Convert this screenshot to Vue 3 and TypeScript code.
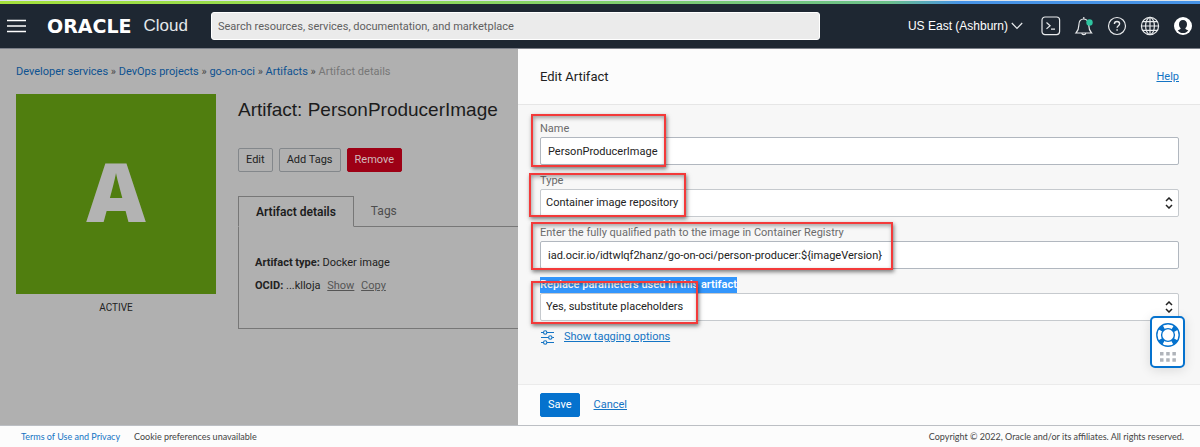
<script setup lang="ts">
import { ref } from 'vue'

interface Crumb { label: string; current?: boolean }

const crumbs: Crumb[] = [
  { label: 'Developer services' },
  { label: 'DevOps projects' },
  { label: 'go-on-oci' },
  { label: 'Artifacts' },
  { label: 'Artifact details', current: true },
]

const name = ref('PersonProducerImage')
const kind = ref('Container image repository')
const path = ref('iad.ocir.io/idtwlqf2hanz/go-on-oci/person-producer:${imageVersion}')
const replace = ref('Yes, substitute placeholders')
</script>

<template>
  <div class="page">
    <div class="strip"></div>
    <header class="topbar">
      <button class="icon-btn menu" aria-label="Menu">
        <svg width="20" height="14" viewBox="0 0 20 14"><path d="M0 1.5h19M0 7h19M0 12.5h19" stroke="#fff" stroke-width="1.6" /></svg>
      </button>
      <a class="logo" href="#"><span class="oracle">ORACLE</span><span class="cloud">Cloud</span></a>
      <input class="search" type="text" aria-label="Search" placeholder="Search resources, services, documentation, and marketplace" />
      <button class="region">
        US East (Ashburn)
        <svg width="12" height="8" viewBox="0 0 12 8"><path d="M.8 1l5.2 5.4L11.200 1" fill="none" stroke="#e8eaec" stroke-width="1.2" /></svg>
      </button>
      <nav class="tools">
        <button class="icon-btn" aria-label="Cloud Shell">
          <svg width="20" height="20" viewBox="0 0 20 20" fill="none" stroke="#e8eaec" stroke-width="1.2"><rect x="1" y="1" width="17.600" height="17.600" rx="3" /><path d="M5.500 6.500l3.600 3.200-3.600 3.200M10 13.200h4" /></svg>
        </button>
        <button class="icon-btn" aria-label="Announcements">
          <svg width="20" height="20" viewBox="0 0 20 20" fill="none" stroke="#e8eaec" stroke-width="1.2"><path d="M2 17h15.500c-2.200-2.400-2.700-4.500-2.700-7.500 0-4-2-6.500-5-6.500s-5 2.500-5 6.500C4.800 12.500 4.200 14.600 2 17zM7.800 17.200c.2 2 3.800 2 4 0M9.800 3V1" /><circle cx="15.500" cy="6.500" r="3.200" fill="#2ec4a0" stroke="none" /></svg>
        </button>
        <button class="icon-btn" aria-label="Help">
          <svg width="20" height="20" viewBox="0 0 20 20" fill="none" stroke="#e8eaec" stroke-width="1.200"><circle cx="10" cy="10" r="8.500" /><path d="M7.400 8c0-3.400 5.200-3.200 5.200-.2 0 1.900-2.500 1.900-2.500 4M10.100 13.200v1.500" stroke-width="1.400" /></svg>
        </button>
        <button class="icon-btn" aria-label="Language">
          <svg width="20" height="20" viewBox="0 0 20 20" fill="none" stroke="#e8eaec" stroke-width="1.200"><circle cx="10" cy="10" r="8.600" /><ellipse cx="10" cy="10" rx="4.400" ry="8.600" /><path d="M10 1.400v17.200M1.400 10h17.200M2.600 5.700h14.800M2.600 14.300h14.800" /></svg>
        </button>
        <button class="icon-btn" aria-label="Profile">
          <svg width="20" height="20" viewBox="0 0 20 20"><circle cx="10" cy="10" r="9" fill="#fff" /><path d="M10 4c2.500 0 4 1.700 4 4.200 0 1.800-.7 3.200-1.700 4 .1 1.300 1.600 1.600 3 2.300-1.400 1.700-3.200 2.600-5.300 2.600s-3.900-.9-5.300-2.600c1.400-.7 2.900-1 3-2.300-1-.8-1.700-2.200-1.700-4C6 5.700 7.500 4 10 4z" fill="#1e2732" /></svg>
        </button>
      </nav>
    </header>

    <div class="workspace">
      <main class="detail">
        <nav class="crumbs" aria-label="Breadcrumb">
          <template v-for="(crumb, i) in crumbs" :key="crumb.label">
            <span v-if="i > 0" class="sep"> » </span>
            <span v-if="crumb.current" class="current">{{ crumb.label }}</span>
            <a v-else href="#">{{ crumb.label }}</a>
          </template>
        </nav>
        <div class="resource">
          <div class="status">
            <div class="tile">A</div>
            <div class="state">ACTIVE</div>
          </div>
          <section class="info">
            <h1>Artifact: PersonProducerImage</h1>
            <div class="actions">
              <button class="btn">Edit</button>
              <button class="btn">Add Tags</button>
              <button class="btn danger">Remove</button>
            </div>
            <div class="tabs" role="tablist">
              <button class="tab active" role="tab" aria-selected="true">Artifact details</button>
              <button class="tab" role="tab" aria-selected="false">Tags</button>
            </div>
            <div class="tab-panel">
              <p><b>Artifact type:</b> Docker image</p>
              <p><b>OCID:</b> ...klloja <a href="#">Show</a> <a href="#">Copy</a></p>
            </div>
          </section>
        </div>
      </main>

      <aside class="drawer">
        <header class="drawer-head">
          <h2>Edit Artifact</h2>
          <a href="#">Help</a>
        </header>
        <form class="drawer-body" @submit.prevent>
          <div class="field">
            <label for="name">Name</label>
            <input id="name" v-model="name" type="text" />
            <span class="mark mark-name"></span>
          </div>
          <div class="field">
            <label for="kind">Type</label>
            <div class="select">
              <select id="kind" v-model="kind"><option>Container image repository</option></select>
              <svg width="8" height="12" viewBox="0 0 8 12"><path d="M1 4l3-3 3 3M1 8l3 3 3-3" fill="none" stroke="#222" stroke-width="1.500" /></svg>
            </div>
            <span class="mark mark-kind"></span>
          </div>
          <div class="field">
            <label for="path">Enter the fully qualified path to the image in Container Registry</label>
            <input id="path" v-model="path" type="text" />
            <span class="mark mark-path"></span>
          </div>
          <div class="field">
            <label for="replace" class="selected">Replace parameters used in this artifact</label>
            <div class="select">
              <select id="replace" v-model="replace"><option>Yes, substitute placeholders</option></select>
              <svg width="8" height="12" viewBox="0 0 8 12"><path d="M1 4l3-3 3 3M1 8l3 3 3-3" fill="none" stroke="#222" stroke-width="1.500" /></svg>
            </div>
            <span class="mark mark-replace"></span>
          </div>
          <div class="tagging">
            <svg width="15" height="15" viewBox="0 0 15 15" fill="none" stroke="#1474c4" stroke-width="1.100"><path d="M1 2.500h2.300M7 2.500h7M1 7.500h7.500M12.200 7.500H14M1 12.500h2.300M7 12.500h7" /><circle cx="5.200" cy="2.500" r="1.700" /><circle cx="10.300" cy="7.500" r="1.700" /><circle cx="5.200" cy="12.500" r="1.700" /></svg>
            <a href="#">Show tagging options</a>
          </div>
        </form>
        <div class="drawer-foot">
          <button class="save">Save</button>
          <a href="#">Cancel</a>
        </div>
        <button class="support" aria-label="Support">
          <svg width="24" height="24" viewBox="0 0 24 24" fill="none" stroke="#0572ce"><circle cx="12" cy="12" r="8.700" stroke-width="5" stroke-dasharray="4.600 9.066" stroke-dashoffset="-4.530" /><circle cx="12" cy="12" r="11.200" stroke-width="1.400" /><circle cx="12" cy="12" r="6.400" stroke-width="1.400" /></svg>
          <svg width="16" height="10" viewBox="0 0 16 10" fill="#b0b4ba"><path d="M0 0h3.500v3.500H0zM6.200 0h3.500v3.500H6.200zM12.400 0h3.500v3.500h-3.500zM0 6.200h3.500v3.500H0zM6.200 6.200h3.500v3.500H6.200zM12.400 6.200h3.500v3.500h-3.500z" /></svg>
        </button>
      </aside>
    </div>

    <footer class="legal">
      <a href="#">Terms of Use and Privacy</a>
      <span>Cookie preferences unavailable</span>
      <span class="copyright">Copyright © 2022, Oracle and/or its affiliates. All rights reserved.</span>
    </footer>
  </div>
</template>

<style>
body { margin: 0; }
</style>

<style scoped>
* { box-sizing: border-box; }
.page {
  min-height: 100vh;
  display: flex;
  flex-direction: column;
  font: 11px/16px Roboto, "Open Sans", sans-serif;
  color: #222;
  background: #fcfcfc;
}
button, input, select { font: inherit; color: inherit; margin: 0; }
button { cursor: pointer; }
h1, h2, p { margin: 0; font-weight: 400; }
svg { display: block; flex: none; }

.strip {
  height: 4px;
  border-top: 1px solid #dde3ea;
  background: linear-gradient(90deg, #a4e03c 0%, #8fd85a 35%, #6cc08a 74%, #4793e6 80%, #4793e6 100%);
}
.topbar {
  height: 45px;
  display: flex;
  align-items: center;
  padding: 0 7px;
  background: #1e2732;
  border-bottom: 1px solid #7b7f88;
  color: #fff;
}
.icon-btn { padding: 0; border: 0; background: none; }
.logo { display: flex; align-items: center; gap: 12px; margin-left: 20px; width: 164px; color: #fff; text-decoration: none; }
.oracle { font: 700 19px/20px "DejaVu Sans", sans-serif; }
.cloud { font: 17px/20px "Liberation Sans", Arial, sans-serif; color: #e4e7ea; }
.search {
  flex: 0 1 609px;
  min-width: 0;
  height: 28px;
  padding: 0 6px;
  border: 1px solid #fff;
  border-radius: 3px;
  background: #ebebeb;
  color: #333;
}
.search::placeholder { color: #5f5f5f; opacity: 1; }
.region {
  display: flex;
  align-items: center;
  gap: 3px;
  margin-left: auto;
  padding: 0;
  border: 0;
  background: none;
  font: 12px/16px "Liberation Sans", Arial, sans-serif;
}
.tools { display: flex; gap: 13px; margin-left: 18px; }

.workspace { flex: 1; display: grid; grid-template-columns: 518fr 682fr; border-bottom: 1px solid #bcbfc4; }
.detail { min-width: 0; padding: 15px 0 16px 16px; background: #b0b0b0; }
.crumbs { color: #4a4a4a; }
.crumbs a { color: #0d5291; text-decoration: none; }
.crumbs .current { color: #777; }
.resource { display: flex; gap: 22px; margin-top: 14px; }
.status { flex: none; width: 200px; text-align: center; }
.tile {
  height: 200px;
  background: #507e0f;
  color: #b3b3b3;
  font: 900 82px/192px "Open Sans", sans-serif;
}
.state { margin-top: 6px; font-size: 10px; }
.info { flex: 1; min-width: 0; }
h1 { padding-top: 4px; font: 19px/24px "Liberation Sans", Arial, sans-serif; color: #1c1c1c; }
.actions { display: flex; gap: 6px; margin-top: 26px; }
.btn {
  height: 24px;
  padding: 0 7px;
  border: 1px solid #83878b;
  border-radius: 2px;
  background: #b0b0b0;
}
.btn.danger { border-color: #9d0015; background: #9d0015; color: #d2b9bc; }
.tabs { display: flex; margin-top: 24px; font-size: 12px; }
.tabs::after { content: ""; flex: 1; border-bottom: 1px solid #777; }
.tab { height: 31px; padding: 0 17px; border: 0; border-bottom: 1px solid #777; background: none; color: #4d4d4d; }
.tab.active { border: 1px solid #777; border-bottom-color: transparent; font-weight: 600; color: #1c1c1c; }
.tab-panel { height: 102px; padding: 28px 16px; border: 1px solid #777; border-width: 0 0 1px 1px; }
.tab-panel p + p { margin-top: 7px; }
.tab-panel b { font-weight: 700; }
.tab-panel a { margin-left: 4px; color: #555; }

.drawer { position: relative; min-width: 0; display: flex; flex-direction: column; background: #fcfcfc; }
.drawer a { color: #1474c4; }
.drawer-head { height: 56px; display: flex; align-items: center; justify-content: space-between; padding: 0 21px 0 22px; border-bottom: 1px solid #e6e6e6; }
h2 { font-size: 13px; color: #222; }
.drawer-body { flex: 1; display: flex; flex-direction: column; gap: 8px; padding: 16px 21px 16px 22px; background: #f7f7f7; }
.field { position: relative; }
.field label { display: block; width: max-content; color: #6b6b6b; }
.field label.selected { background: #3396fc; color: #fff; font-weight: 600; }
.field input, .field select {
  display: block;
  width: 100%;
  height: 28px;
  padding: 0 7px;
  border: 1px solid #b1b7bf;
  border-radius: 2px;
  background: #fff;
  color: #222;
}
.select { position: relative; }
.field .select select { appearance: none; padding: 0 5px; border-color: #c6cace; }
.select svg { position: absolute; right: 6px; top: 8px; }
.mark { position: absolute; border: 2px solid #f33a3a; box-shadow: 1px 2px 4px rgba(0, 0, 0, 0.5), inset 1px 2px 4px rgba(0, 0, 0, 0.35); pointer-events: none; }
.mark-name { left: -9px; top: -7px; width: 135px; height: 53px; }
.mark-kind { left: -11px; top: 0; width: 157px; height: 44px; }
.mark-path { left: -9px; top: -3px; width: 362px; height: 48px; }
.mark-replace { left: -9px; top: 4px; width: 167px; height: 43px; }
.tagging { display: flex; align-items: center; gap: 9px; }
.drawer-foot { display: flex; align-items: center; gap: 14px; height: 41px; padding: 0 22px; border-top: 1px solid #ebebeb; }
.save { height: 24px; padding: 0 7px; border: 1px solid #0572ce; border-radius: 2px; background: #0572ce; color: #fff; }
.support {
  position: absolute;
  right: 15px;
  bottom: 57px;
  width: 35px;
  height: 52px;
  display: flex;
  flex-direction: column;
  align-items: center;
  justify-content: center;
  gap: 5px;
  padding: 0;
  border: 2px solid #0572ce;
  border-radius: 5px;
  background: #fff;
  box-shadow: 0 2px 12px rgba(0, 0, 0, 0.12);
}

.legal { display: flex; align-items: center; gap: 14px; height: 21px; padding: 0 16px 0 21px; font-family: Lato, sans-serif; font-size: 9px; color: #444; }
.legal a { color: #1474c4; text-decoration: none; }
.copyright { margin-left: auto; }
</style>
